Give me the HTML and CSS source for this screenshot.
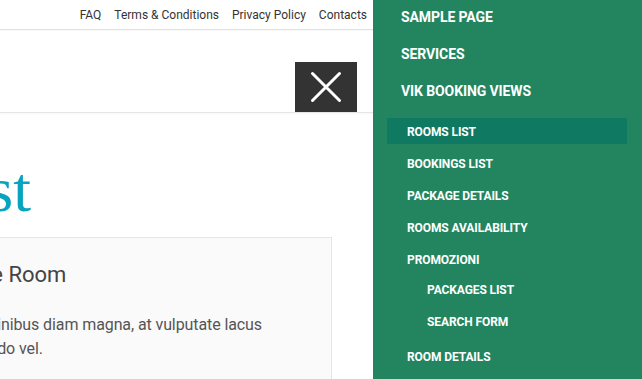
FILE: index.html
```html
<!DOCTYPE html>
<html lang="en">
<head>
<meta charset="utf-8">
<title>Rooms List</title>
<link rel="stylesheet" href="styles.css">
</head>
<body>
<div class="screen">
  <main class="site">
    <div class="topbar">
      <nav class="toplinks">
        <a href="#">FAQ</a>
        <a href="#">Terms &amp; Conditions</a>
        <a href="#">Privacy Policy</a>
        <a href="#">Contacts</a>
      </nav>
    </div>
    <header class="masthead">
      <button class="close" aria-label="Close menu">
        <svg width="32" height="32" viewBox="0 0 32 32" aria-hidden="true">
          <path d="M2.5 2.5 L29.5 29.5 M29.5 2.5 L2.5 29.5" stroke="#fff" stroke-width="3" stroke-linecap="round" fill="none"/>
        </svg>
      </button>
    </header>
    <section class="content">
      <h1 class="page-title">Rooms List</h1>
      <article class="room-card">
        <h2 class="room-name">Single Room</h2>
        <p class="room-desc">Donec finibus diam magna, at vulputate lacus<br>commodo vel.</p>
        <p class="room-meta">Adults: 1 &nbsp; Children: 0 &nbsp; from € 80</p>
      </article>
    </section>
  </main>
  <aside class="offcanvas">
    <ul class="menu">
      <li><a href="#">Sample Page</a></li>
      <li><a href="#">Services</a></li>
      <li><a href="#">Vik Booking Views</a>
        <ul class="submenu">
          <li><a href="#" class="active">Rooms List</a></li>
          <li><a href="#">Bookings List</a></li>
          <li><a href="#">Package Details</a></li>
          <li><a href="#">Rooms Availability</a></li>
          <li><a href="#">Promozioni</a>
            <ul class="submenu nested">
              <li><a href="#">Packages List</a></li>
              <li><a href="#">Search Form</a></li>
            </ul>
          </li>
          <li><a href="#">Room Details</a></li>
        </ul>
      </li>
    </ul>
  </aside>
</div>
</body>
</html>
```

FILE: styles.css
```css
* { box-sizing: border-box; }

html, body {
  margin: 0;
  padding: 0;
  background: #fff;
}

body {
  font-family: Roboto, "Liberation Sans", Arial, sans-serif;
}

a { text-decoration: none; color: inherit; }

.screen {
  display: flex;
  width: 642px;
  height: 379px;
  overflow: hidden;
}

.site {
  flex: none;
  width: 373px;
  overflow: hidden;
  background: #fff;
}

/* top bar */
.topbar {
  height: 30px;
  border-bottom: 1px solid #e2e2e2;
  display: flex;
  justify-content: flex-end;
  align-items: center;
  padding-right: 6px;
}

.toplinks {
  display: flex;
  gap: 13px;
  font-size: 12px;
  color: #333;
  white-space: nowrap;
}

/* header */
.masthead {
  height: 83px;
  padding-top: 6px;
  border-top: 1px solid #f7f7f7;
  border-bottom: 1px solid #e6e6e6;
  box-shadow: 0 1px 2px rgba(0, 0, 0, 0.04);
  display: flex;
  justify-content: flex-end;
  align-items: flex-end;
  padding-right: 16px;
}

.close {
  width: 62px;
  height: 50px;
  border: 0;
  padding: 0;
  background: #333;
  display: flex;
  align-items: center;
  justify-content: center;
  cursor: pointer;
}

.close svg { display: block; }

/* content */
.content {
  margin-left: -78px;
  padding-right: 41px;
}

.page-title {
  margin: 41px 0 0 -188px;
  font-family: "Liberation Serif", "Times New Roman", serif;
  font-weight: 400;
  font-size: 64px;
  line-height: 72px;
  color: #08a3bf;
  white-space: nowrap;
}

.room-card {
  margin-top: 11px;
  background: #fafafa;
  border: 1px solid #e6e6e6;
  padding: 22px 20px 20px;
}

.room-name {
  margin: 0;
  font-size: 22px;
  font-weight: 400;
  line-height: 30px;
  color: #444;
  white-space: nowrap;
}

.room-desc {
  margin: 23px 0 0;
  font-size: 16px;
  line-height: 24px;
  color: #555;
  white-space: nowrap;
  letter-spacing: -0.1px;
}

.room-meta {
  margin: 15px 0 0;
  font-size: 15px;
  line-height: 24px;
  color: #5a8a9c;
  white-space: nowrap;
}

/* off-canvas menu */
.offcanvas {
  flex: none;
  width: 269px;
  background: #23855f;
  color: #fff;
  font-weight: 700;
  text-transform: uppercase;
}

.menu {
  list-style: none;
  margin: -1px 0 0;
  padding: 0;
}

.menu > li > a {
  display: block;
  line-height: 37px;
  padding-left: 28px;
  font-size: 14px;
  letter-spacing: -0.1px;
}

.submenu {
  list-style: none;
  margin: 8px 15px 0 14px;
  padding: 0;
  display: flex;
  flex-direction: column;
  gap: 6px;
}

.submenu > li > a {
  display: block;
  height: 26px;
  line-height: 26px;
  padding-top: 1px;
  padding-left: 20px;
  font-size: 12px;
  letter-spacing: -0.1px;
}

.submenu > li > a.active {
  background: #0f7962;
}

.submenu.nested {
  margin: 0;
  padding: 3.5px 0 3px 20px;
}
```
